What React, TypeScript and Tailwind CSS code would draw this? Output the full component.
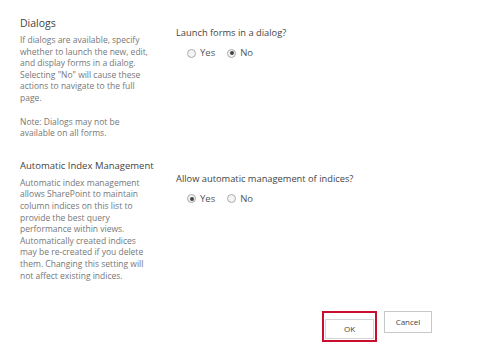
import React from "react";

/* ================= PAGE ================= */

export default function App() {
    return (
        <div
            className="w-[482px] h-[362px] bg-white overflow-hidden"
            style={{ fontFamily: '"Open Sans", "Noto Sans", sans-serif' }}
        >
            {/* Dialogs */}
            <div className="flex pt-[16px]">
                <div className="w-[148px] pl-[20px] shrink-0">
                    <h2 className="text-[10.5px] leading-[14px] text-[#444]">Dialogs</h2>
                    <p className="mt-[4px] text-[8.5px] leading-[11.6px] text-[#777]">
                        If dialogs are available, specify whether to launch the new, edit,
                        and display forms in a dialog. Selecting "No" will cause these
                        actions to navigate to the full page.
                    </p>
                    <p className="mt-[12px] text-[8.5px] leading-[11.6px] text-[#777]">
                        Note: Dialogs may not be available on all forms.
                    </p>
                </div>
                <div className="pl-[28px] pt-[10px]">
                    <Question text="Launch forms in a dialog?" />
                    <RadioGroup value="no" />
                </div>
            </div>

            {/* Automatic Index Management */}
            <div className="flex pt-[20px]">
                <div className="w-[148px] pl-[20px] shrink-0">
                    <h2 className="text-[9.5px] leading-[14px] text-[#444] whitespace-nowrap">
                        Automatic Index Management
                    </h2>
                    <p className="mt-[4px] text-[8.5px] leading-[11.6px] text-[#777]">
                        Automatic index management allows SharePoint to maintain column
                        indices on this list to provide the best query performance within
                        views. Automatically created indices may be re-created if you
                        delete them. Changing this setting will not affect existing indices.
                    </p>
                </div>
                <div className="pl-[28px] pt-[13px]">
                    <Question text="Allow automatic management of indices?" />
                    <RadioGroup value="yes" />
                </div>
            </div>

            {/* Buttons */}
            <div className="flex justify-end items-start gap-[7px] pr-[50px] pt-[30px]">
                <div className="border-2 border-[#c8102e] p-[1px]">
                    <button className="w-[49px] h-[20px] border border-[#d4d4d4] bg-white text-[8px] text-[#444]">
                        OK
                    </button>
                </div>
                <button className="w-[48px] h-[22px] border border-[#c8c8c8] bg-white text-[8px] text-[#444]">
                    Cancel
                </button>
            </div>
        </div>
    );
}

/* ================= UI COMPONENTS ================= */

function Question({ text }: { text: string }) {
    return <p className="text-[9.3px] leading-[14px] text-[#444]">{text}</p>;
}

function RadioGroup({ value }: { value: "yes" | "no" }) {
    return (
        <div className="flex items-center gap-[12px] pl-[11px] mt-[6px]">
            <Radio label="Yes" checked={value === "yes"} />
            <Radio label="No" checked={value === "no"} />
        </div>
    );
}

function Radio({ label, checked }: { label: string; checked: boolean }) {
    return (
        <span className="flex items-center gap-[4px] text-[9.5px] leading-[14px] text-[#555]">
            <span className="w-[9px] h-[9px] rounded-full border border-[#aaa] bg-[#f4f4f4] flex items-center justify-center">
                {checked && <span className="w-[4px] h-[4px] rounded-full bg-[#444]" />}
            </span>
            {label}
        </span>
    );
}
